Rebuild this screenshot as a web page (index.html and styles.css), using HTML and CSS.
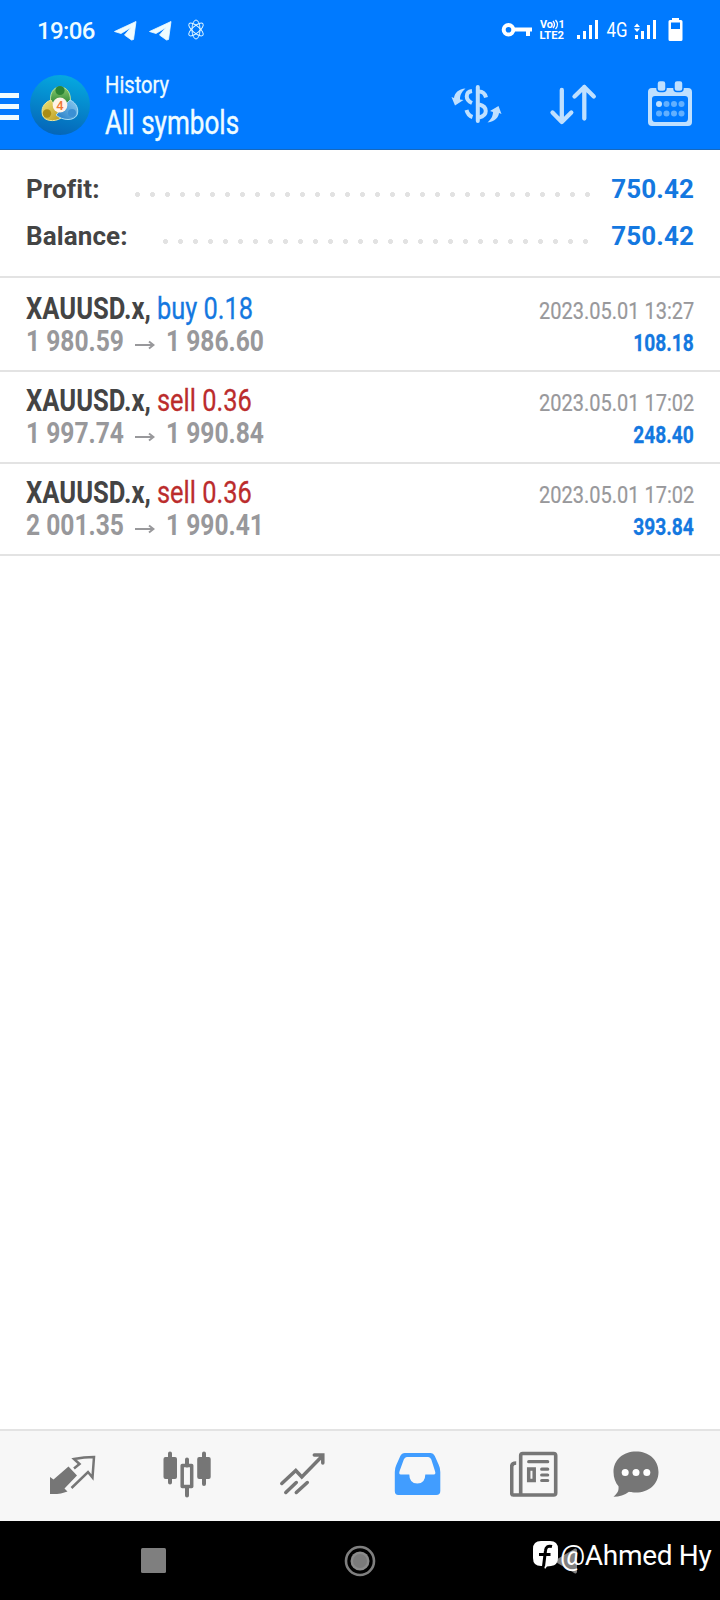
FILE: index.html
```
<!DOCTYPE html>
<html lang="en">
<head>
<meta charset="utf-8">
<title>History</title>
<link rel="stylesheet" href="styles.css">
</head>
<body>
<div class="app">
  <header class="top">
    <div class="status">
      <span class="clock">19:06</span>
      <svg class="status-left" width="96" height="24" viewBox="0 0 96 24">
        <g fill="#effcff" stroke="#effcff" stroke-width=".8" stroke-linejoin="round">
          <path d="M1.500 12.500 23 2.500 20.500 20.500 18.500 21 11.500 16 18 8.500 8 14.500Z"/>
          <path d="M36.500 12.500 58 2.500 55.500 20.500 53.500 21 46.500 16 53 8.500 43 14.500Z"/>
        </g>
        <g fill="none" stroke="#dff6ff" stroke-width="1">
          <ellipse cx="83" cy="10.500" rx="4" ry="9.500"/>
          <ellipse cx="83" cy="10.500" rx="3.500" ry="9" transform="rotate(50 83 10.500)"/>
          <ellipse cx="83" cy="10.500" rx="3.500" ry="9" transform="rotate(-50 83 10.500)"/>
        </g>
      </svg>
      <svg class="status-right" width="184" height="26" viewBox="500 17 184 26" fill="#fff">
        <circle cx="508.500" cy="29.700" r="4.800" fill="none" stroke="#fff" stroke-width="4"/>
        <path d="M514 27.500h18v4h-2v4.500h-4v-4.500h-12z"/>
        <text class="volte" x="540" y="28" textLength="13" lengthAdjust="spacingAndGlyphs">Vo</text>
        <path d="M553 21q3 3.500 0 7M555.500 20q4 4.500 0 9" fill="none" stroke="#fff" stroke-width="1.300"/>
        <text class="volte" x="558.500" y="28">1</text>
        <text class="volte" x="539.500" y="39" textLength="24.500" lengthAdjust="spacingAndGlyphs">LTE2</text>
        <path d="M577 35h3v4h-3zM583 31h3v8h-3zM589 25h3v14h-3zM595 20h3v19h-3z"/>
        <text class="net" x="606.500" y="36.500" textLength="21" lengthAdjust="spacingAndGlyphs">4G</text>
        <path d="M635 35h3v4h-3zM641 31h3v8h-3zM647 25h3v14h-3zM653 20h3v19h-3zM634 27l3-3.500 3 3.500zM634 28.500l3 3.500 3-3.500z"/>
        <path fill-rule="evenodd" d="M672 18h7v2h2q1.500 0 1.500 1.500v18q0 1.500-1.500 1.500h-11q-1.500 0-1.500-1.500v-18q0-1.500 1.500-1.500h2zM671 22.500v6.500h9v-6.500z"/>
      </svg>
    </div>
    <div class="bar">
      <div class="menu"><i></i><i></i><i></i></div>
      <svg class="logo" width="60" height="60" viewBox="0 0 60 60">
        <defs>
          <linearGradient id="sky" x1="0.600" y1="0" x2="0.400" y2="1"><stop offset="0" stop-color="#05a9e0"/><stop offset="1" stop-color="#0565b8"/></linearGradient>
          <linearGradient id="gr" x1="0" y1="0" x2="0" y2="1"><stop offset="0" stop-color="#8ccb6c"/><stop offset="1" stop-color="#278336"/></linearGradient>
          <linearGradient id="ye" x1="0" y1="0" x2="1" y2="1"><stop offset="0" stop-color="#f0e47a"/><stop offset="1" stop-color="#b99a1c"/></linearGradient>
          <linearGradient id="bl" x1="1" y1="0" x2="0" y2="1"><stop offset="0" stop-color="#8ccdf2"/><stop offset="1" stop-color="#2079c4"/></linearGradient>
        </defs>
        <circle cx="30" cy="30" r="30" fill="url(#sky)"/>
        <path d="M21 29c-2-10 2-17 9-17s12 6 10 18" fill="url(#gr)" stroke="#b9e29b" stroke-width="1"/>
        <path d="M21 25c-8 3-10 9-8.500 15 1.500 6 12 7.500 18.500 3z" fill="url(#ye)" stroke="#efe696" stroke-width="1"/>
        <path d="M40 25c7 3 9 10 7 15-3 6-14 6-21 0z" fill="url(#bl)" stroke="#a5dcf6" stroke-width="1"/>
        <circle cx="30" cy="15.500" r="4.600" fill="#2b8436"/><circle cx="17" cy="38.500" r="4.200" fill="#a98c16"/><circle cx="42" cy="38" r="4" fill="#3b90d4"/>
        <circle cx="30" cy="30" r="7.400" fill="#fff3e8"/>
        <text class="four" x="30" y="34.700" text-anchor="middle">4</text>
      </svg>
      <div class="titles">
        <div class="sub"><span>History</span></div>
        <div class="main"><span>All symbols</span></div>
      </div>
      <svg class="tools" width="244" height="48" viewBox="450 80 244 48">
        <g fill="none" stroke="#bfe0ff" stroke-width="4">
          <path d="M478.800 87v34" stroke-linecap="round"/>
          <path d="M473 91c-7 1-7 9 0 12M467.500 110c1 4 3 6 6 7M480 91.500c4 0 6 2 7 6M480 104.500c9 2 9 11 0 13"/>
        </g>
        <path fill="#bfe0ff" d="M466.500 88.500c-7 .5-11 4.500-11.500 9.500l-2.500-1 3.500 8.500 8.500-5.500-3.500-.5c0-4 1-7 5.500-11zM488.500 122.500c7.500-1 11-5 11.500-9.500l2.500 1-3-8-8.500 5 3 1c0 3-1 6.500-5.500 10.500z"/>
        <g fill="none" stroke="#bfe0ff" stroke-width="4.300" stroke-linecap="round" stroke-linejoin="round">
          <path d="M562.800 90v32M553.500 112.500l9.300 9.500 9.500-9.500M585.300 118.500v-31.500M575.500 96.500l9.800-9.500 9.500 9.500"/>
        </g>
        <path fill="#bfe0ff" fill-rule="evenodd" d="M653 88h36q4 0 4 4v30q0 4-4 4h-36q-4 0-4-4v-30q0-4 4-4zM656 96q-3 0-3 3v19q0 4 3 4h30q3 0 3-4v-19q0-3-3-3z"/>
        <g fill="#bfe0ff" stroke="#007aff" stroke-width="1.500"><rect x="658" y="80.500" width="9" height="11" rx="3"/><rect x="675" y="80.500" width="9" height="11" rx="3"/></g>
        <g fill="#62b0ff"><circle cx="660" cy="104" r="3" fill="#bfe0ff"/><circle cx="667.500" cy="104" r="3"/><circle cx="675" cy="104" r="3"/><circle cx="682.500" cy="104" r="3"/><circle cx="660" cy="113.500" r="3"/><circle cx="667.500" cy="113.500" r="3"/><circle cx="675" cy="113.500" r="3"/><circle cx="682.500" cy="113.500" r="3"/></g>
      </svg>
    </div>
  </header>

  <section class="summary">
    <div class="line"><span class="label profit">Profit:</span><span class="dots dots-profit"></span><b>750.42</b></div>
    <div class="line"><span class="label balance">Balance:</span><span class="dots dots-balance"></span><b>750.42</b></div>
  </section>

  <main class="deals">
    <article class="deal">
      <div class="left"><div class="row sym-row"><span class="sym">XAUUSD.x,</span><span class="side buy">buy 0.18</span></div>
      <div class="row price"><span class="from">1 980.59</span><svg width="20" height="10" viewBox="0 0 20 10"><path d="M0 5h18M14 1.500l4.500 3.500-4.500 3.500"/></svg><span class="to">1 986.60</span></div></div>
      <div class="right"><div class="time"><span>2023.05.01 13:27</span></div><div class="gain"><span>108.18</span></div></div>
    </article>
    <article class="deal">
      <div class="left"><div class="row sym-row"><span class="sym">XAUUSD.x,</span><span class="side sell">sell 0.36</span></div>
      <div class="row price"><span class="from">1 997.74</span><svg width="20" height="10" viewBox="0 0 20 10"><path d="M0 5h18M14 1.500l4.500 3.500-4.500 3.500"/></svg><span class="to">1 990.84</span></div></div>
      <div class="right"><div class="time"><span>2023.05.01 17:02</span></div><div class="gain"><span>248.40</span></div></div>
    </article>
    <article class="deal">
      <div class="left"><div class="row sym-row"><span class="sym">XAUUSD.x,</span><span class="side sell">sell 0.36</span></div>
      <div class="row price"><span class="from">2 001.35</span><svg width="20" height="10" viewBox="0 0 20 10"><path d="M0 5h18M14 1.500l4.500 3.500-4.500 3.500"/></svg><span class="to">1 990.41</span></div></div>
      <div class="right"><div class="time"><span>2023.05.01 17:02</span></div><div class="gain"><span>393.84</span></div></div>
    </article>
  </main>

  <nav class="tabs">
    <svg width="48" height="48" viewBox="48 1450 48 48">
      <path fill="#767676" d="M50 1477l3.500 2.500 15-13 8.500 9-12.500 13 3 3q-7 3-17.500 2.500z"/>
      <path fill="none" stroke="#767676" stroke-width="2.500" d="M74 1468.500l5.500-4.500-5.500-5q10-2 20-2l-1.500 20.500-4.500-5.500-16.500 16"/>
    </svg>
    <svg width="48" height="48" viewBox="163.500 1450 48 48">
      <path stroke="#767676" stroke-width="4" stroke-linecap="round" d="M170.500 1453.500v29M187.500 1459.500v6M187.500 1488v7.500M204.500 1453.500v30.500"/>
      <rect x="164" y="1457" width="13.500" height="22" rx="2" fill="#767676"/><rect x="197.700" y="1457" width="13.500" height="22" rx="2" fill="#767676"/>
      <rect x="182.700" y="1465.500" width="9.500" height="21" fill="none" stroke="#767676" stroke-width="3.500" stroke-linejoin="round"/>
    </svg>
    <svg width="48" height="48" viewBox="278.700 1450 48 48" fill="none" stroke="#767676" stroke-width="3.500" stroke-linecap="round">
      <path d="M281.500 1483.500l14-13 6 6.500 20.500-21M314 1455h8.500v8M285.500 1492.500l10.500-10M296 1492.500l11-10"/>
    </svg>
    <svg width="48" height="48" viewBox="394.200 1450 48 48">
      <path fill="#419dff" fill-rule="evenodd" d="M405 1453h26q2.500 0 4 3l4 9q1.500 3 1.500 7v19q0 4-4 4h-38q-3.500 0-3.500-4v-19q0-4 1.500-7l4-9q1.500-3 4.500-3zM407 1457q-2 0-3 2.500l-4 11q-1.500 4 1 4h8.500q0 9 8 9t8-9h8.500q2.500 0 1-4l-3.500-11q-1-2.500-3-2.500z"/>
    </svg>
    <svg width="48" height="48" viewBox="509.800 1450 48 48">
      <path fill="none" stroke="#767676" stroke-width="3.600" d="M520.500 1494.500v-39q0-2 2-2h31q2 0 2 2v37.500q0 2-2 2h-40.500q-1.500 0-1.500-2v-26.500q0-3.500 4.500-3.500"/>
      <path stroke="#767676" stroke-width="3.200" stroke-linecap="round" d="M528.500 1461.700h19M541.500 1469.200h6M541.500 1475h6M541.500 1480.500h6"/>
      <rect x="528.500" y="1469" width="5.500" height="11.500" fill="none" stroke="#767676" stroke-width="3.500"/>
    </svg>
    <svg class="chat" width="48" height="48" viewBox="612 1450 48 48">
      <path fill="#767676" d="M636 1451.500c12.500 0 22.500 8 22.500 20.500s-10 20.500-22.500 20.500c-3 0-5-.2-7-.8-4.500 3.500-9.500 5-15.500 5 4-3.500 5.500-6 5-10.500-3-3.500-5-8-5-14.200 0-12.500 10-20.500 22.500-20.500z"/>
      <g fill="#fff"><circle cx="625.200" cy="1472.500" r="3.500"/><circle cx="636" cy="1472.500" r="3.500"/><circle cx="646.800" cy="1472.500" r="3.500"/></g>
    </svg>
  </nav>

  <footer class="system">
    <svg width="25" height="25" viewBox="0 0 25 25"><rect width="25" height="25" rx="1.500" fill="#7f7f7f"/></svg>
    <svg width="32" height="32" viewBox="0 0 32 32"><circle cx="16" cy="16" r="14" fill="none" stroke="#7f7f7f" stroke-width="2.600"/><circle cx="16" cy="16" r="9.500" fill="#8b8b8b"/><circle cx="16" cy="16" r="7" fill="#7b7b7b"/></svg>
    <svg width="23" height="26" viewBox="0 0 23 26"><path fill="#7f7f7f" d="M0 13 21 .5q2-.5 2 2v21q0 2.500-2 2z"/></svg>
    <div class="credit">
      <svg width="25" height="29" viewBox="0 0 25 29"><path fill="#fff" d="M8 0h9q8 0 8 8v9q0 7-7 8l-4 .5-2 2.500-1-3h-3q-8 0-8-8v-9q0-8 8-8z"/><path d="M19 5.500q-6-1.500-6.500 4l-2 16M6 13.500h11.500" fill="none" stroke="#000" stroke-width="3"/></svg>
      <span>@Ahmed Hy</span>
    </div>
  </footer>
</div>
</body>
</html>
```
FILE: styles.css
```
* { box-sizing: border-box; }
body { margin: 0; font-family: Roboto, "Liberation Sans", sans-serif; background: #fff; }
svg { display: block; flex: none; }
.app { width: 720px; height: 1600px; display: flex; flex-direction: column; overflow: hidden; }
.top { height: 150px; background: #007aff; color: #effcff; border-bottom: 1px solid #1768bd; flex: none; }
.status { height: 60px; display: flex; align-items: center; padding: 2px 36px 0 37px; }
.clock { font-size: 24px; font-weight: 500; width: 76px; line-height: 24px; letter-spacing: -.6px; }
.status-right { margin: -2px 0 0 auto; }
.volte { font-size: 11px; font-weight: 700; }
.net { font-size: 20px; }
.bar { display: flex; height: 89px; align-items: flex-start; }
.menu { flex: none; width: 30px; padding-top: 33px; display: flex; flex-direction: column; gap: 6.500px; }
.menu i { width: 19px; height: 4.700px; background: #effcff; }
.logo { margin-top: 15px; }
.four { font-size: 13px; font-weight: 500; fill: #f07834; }
.titles { flex: none; width: 359px; padding: 11px 0 0 15px; white-space: nowrap; }
.titles span, .row > span, .time span, .gain span { display: inline-block; transform-origin: left center; }
.sub { font-size: 24px; line-height: 28px; -webkit-text-stroke: .3px; }
.sub span { transform: scaleX(.84); }
.main { font-size: 33px; line-height: 44px; margin-top: 2px; -webkit-text-stroke: .4px; }
.main span { transform: scaleX(.79); }
.tools { margin: 20px 0 0; }
.summary { height: 128px; flex: none; padding: 15px 26px 0; border-bottom: 2px solid #e3e3e3; }
.line { display: flex; align-items: center; height: 47px; font-size: 26px; color: #444; }
.label { font-weight: 700; letter-spacing: .1px; }
.profit { width: 106px; }
.balance { width: 134px; }
.dots { height: 5px; margin-top: 11px; background: radial-gradient(circle at 2.500px 2.500px, #e2e2e2 2.200px, transparent 2.800px) 0 0 / 15px 5px repeat-x; }
.dots-profit { width: 456px; margin-left: 3px; }
.dots-balance { width: 426px; margin-left: 3px; }
.line b { margin-left: auto; font-weight: 700; letter-spacing: .1px; color: #1478e0; }
.deal { height: 92px; display: flex; justify-content: space-between; padding: 12px 26px 0; border-bottom: 2px solid #e3e3e3; }
.deal:first-child { height: 94px; padding-top: 14px; }
.row { display: flex; align-items: center; height: 32px; font-size: 30.500px; white-space: nowrap; }
.sym { width: 131px; font-weight: 700; color: #444; transform: scaleX(.84); }
.side { transform: scaleX(.833); -webkit-text-stroke: .3px; }
.buy { color: #1478e0; }
.sell { color: #bb2c2c; }
.price { font-size: 30px; font-weight: 700; color: #98989b; }
.from { width: 109px; transform: scaleX(.82); }
.to { margin-left: 11px; transform: scaleX(.82); }
.price svg { margin-top: 9px; fill: none; stroke: #98989b; stroke-width: 2; }
.right { text-align: right; white-space: nowrap; }
.right span { transform-origin: right center; }
.time { font-size: 24px; line-height: 32px; color: #98989b; padding-top: 3px; }
.time span { transform: scaleX(.833); -webkit-text-stroke: .2px; }
.gain { font-size: 24px; line-height: 32px; font-weight: 700; color: #1478e0; }
.gain span { transform: scaleX(.8); -webkit-text-stroke: .3px; }
.tabs { margin-top: auto; flex: none; height: 92px; border-top: 2px solid #e3e3e3; background: #f7f7f7; display: flex; padding: 19px 0 0 48px; gap: 67.400px; }
.chat { margin-left: -12.500px; }
.system { flex: none; height: 79px; background: #000; display: flex; align-items: center; gap: 178px; padding-left: 141px; position: relative; }
.credit { position: absolute; left: 533px; top: 20px; display: flex; align-items: center; gap: 2px; color: #fff; font-size: 28px; letter-spacing: -.3px; line-height: 28px; white-space: nowrap; }
```
